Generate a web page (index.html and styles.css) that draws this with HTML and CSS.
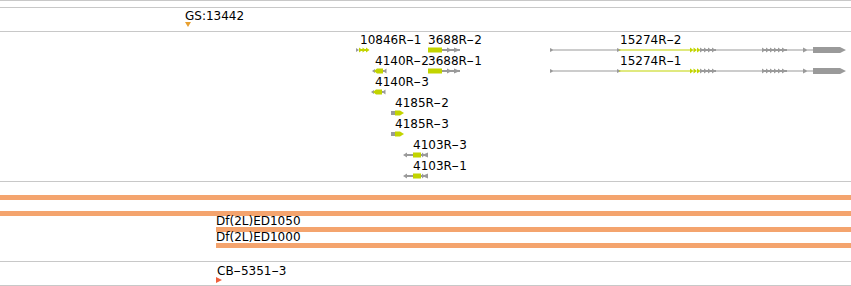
FILE: index.html
```html
<!DOCTYPE html>
<html lang="en">
<head>
    <meta charset="UTF-8">
    <meta name="viewport" content="width=device-width, initial-scale=1.0">
    <title>Track view</title>
    <link rel="stylesheet" href="styles.css">
</head>
<body>
    <div class="view">
        <div class="ruler"></div>

        <!-- GS track -->
        <div class="track track-gs">
            <div class="feat" style="left:185px;top:2px">
                <div class="lbl">GS:13442</div>
                <svg class="mark" width="7" height="5" viewBox="0 0 7 5"><path d="M0 0H6L3 5Z" fill="#e8a030"/></svg>
            </div>
        </div>

        <!-- gene models -->
        <div class="track track-genes">
            <div class="feat gene" style="left:356px;top:2px">
                <div class="lbl" style="padding-left:4px">10846R<span class="dash">-</span>1</div>
                <svg width="14" height="6" viewBox="0 0 14 6">
                    <path d="M0 1L3 3L0 5Z" fill="#9a9a9a"/>
                    <path d="M3 2H12V4H3Z M3 .5L6.5 3L3 5.5Z M6.5 .5L10 3L6.5 5.5Z M10 .5L13.5 3L10 5.5Z" fill="#c2d400"/>
                </svg>
            </div>
            <div class="feat gene" style="left:428px;top:2px">
                <div class="lbl">3688R<span class="dash">-</span>2</div>
                <svg width="34" height="6" viewBox="0 0 34 6">
                    <rect x="0" y=".5" width="14" height="5" fill="#c2d400"/>
                    <path d="M14 2H32V4H14Z M19 .5L24 3L19 5.5Z M26 .5L32 3L26 5.5Z" fill="#9a9a9a"/>
                </svg>
            </div>
            <div class="feat gene" style="left:550px;top:2px">
                <div class="lbl" style="padding-left:70px">15274R<span class="dash">-</span>2</div>
                <svg width="297" height="6" viewBox="0 0 297 6">
                    <path d="M0 1L4 3L0 5Z M0 2.5H67V3.5H0Z M67 1L71 3L67 5Z" fill="#9a9a9a"/>
                    <path d="M69 2.5H140V3.5H69Z M140 .5L143.5 3L140 5.5Z M143.5 .5L147 3L143.5 5.5Z M147 .5L150.5 3L147 5.5Z" fill="#c2d400"/>
                    <path d="M150 2H166V4H150Z M150 .5L153.5 3L150 5.5Z M154 .5L157.5 3L154 5.5Z M158 .5L161.5 3L158 5.5Z M162 .5L165.5 3L162 5.5Z
                             M166 2.5H212V3.5H166Z
                             M212 2H237V4H212Z M212 .5L215.5 3L212 5.5Z M216 .5L219.5 3L216 5.5Z M220 .5L223.5 3L220 5.5Z M224 .5L227.5 3L224 5.5Z M228 .5L231.5 3L228 5.5Z M232 .5L236 3L232 5.5Z
                             M237 2.5H263V3.5H237Z M253 .5L258 3L253 5.5Z
                             M263 0H290L296 3L290 6H263Z" fill="#9a9a9a"/>
                </svg>
            </div>

            <div class="feat gene" style="left:372px;top:23px">
                <div class="lbl" style="padding-left:3px">4140R<span class="dash">-</span>2</div>
                <svg width="15" height="6" viewBox="0 0 15 6">
                    <path d="M0 3L3 1V5Z M11 2H12V4H11Z M11 3L14.5 .5V5.5Z" fill="#9a9a9a"/>
                    <path d="M2 3L5 .5H11V5.5H5Z" fill="#c2d400"/>
                </svg>
            </div>
            <div class="feat gene" style="left:428px;top:23px">
                <div class="lbl">3688R<span class="dash">-</span>1</div>
                <svg width="34" height="6" viewBox="0 0 34 6">
                    <rect x="0" y=".5" width="14" height="5" fill="#c2d400"/>
                    <path d="M14 2H32V4H14Z M19 .5L24 3L19 5.5Z M26 .5L32 3L26 5.5Z" fill="#9a9a9a"/>
                </svg>
            </div>
            <div class="feat gene" style="left:550px;top:23px">
                <div class="lbl" style="padding-left:70px">15274R<span class="dash">-</span>1</div>
                <svg width="297" height="6" viewBox="0 0 297 6">
                    <path d="M0 1L4 3L0 5Z M0 2.5H67V3.5H0Z M67 1L71 3L67 5Z" fill="#9a9a9a"/>
                    <path d="M69 2.5H140V3.5H69Z M140 .5L143.5 3L140 5.5Z M143.5 .5L147 3L143.5 5.5Z M147 .5L150.5 3L147 5.5Z" fill="#c2d400"/>
                    <path d="M150 2H166V4H150Z M150 .5L153.5 3L150 5.5Z M154 .5L157.5 3L154 5.5Z M158 .5L161.5 3L158 5.5Z M162 .5L165.5 3L162 5.5Z
                             M166 2.5H212V3.5H166Z
                             M212 2H237V4H212Z M212 .5L215.5 3L212 5.5Z M216 .5L219.5 3L216 5.5Z M220 .5L223.5 3L220 5.5Z M224 .5L227.5 3L224 5.5Z M228 .5L231.5 3L228 5.5Z M232 .5L236 3L232 5.5Z
                             M237 2.5H263V3.5H237Z M253 .5L258 3L253 5.5Z
                             M263 0H290L296 3L290 6H263Z" fill="#9a9a9a"/>
                </svg>
            </div>

            <div class="feat gene" style="left:371px;top:44px">
                <div class="lbl" style="padding-left:4px">4140R<span class="dash">-</span>3</div>
                <svg width="15" height="6" viewBox="0 0 15 6">
                    <path d="M0 3L3 1V5Z M11 2H12V4H11Z M11 3L14.5 .5V5.5Z" fill="#9a9a9a"/>
                    <path d="M2 3L5 .5H11V5.5H5Z" fill="#c2d400"/>
                </svg>
            </div>

            <div class="feat gene" style="left:391px;top:65px">
                <div class="lbl" style="padding-left:4px">4185R<span class="dash">-</span>2</div>
                <svg width="14" height="6" viewBox="0 0 14 6">
                    <rect x="0" y="1" width="4" height="4" fill="#9a9a9a"/>
                    <path d="M4 .5H9L13 3L9 5.5H4Z" fill="#c2d400"/>
                </svg>
            </div>
            <div class="feat gene" style="left:391px;top:86px">
                <div class="lbl" style="padding-left:4px">4185R<span class="dash">-</span>3</div>
                <svg width="14" height="6" viewBox="0 0 14 6">
                    <rect x="0" y="1" width="4" height="4" fill="#9a9a9a"/>
                    <path d="M4 .5H9L13 3L9 5.5H4Z" fill="#c2d400"/>
                </svg>
            </div>

            <div class="feat gene" style="left:403px;top:107px">
                <div class="lbl" style="padding-left:10px">4103R<span class="dash">-</span>3</div>
                <svg width="26" height="6" viewBox="0 0 26 6">
                    <path d="M0 3L4 .5V2H10V4H4V5.5Z M18 2H20V4H18Z M19 3L25 .5V5.5Z M19 .5L22 3L19 5.5Z" fill="#9a9a9a"/>
                    <rect x="10" y=".5" width="8" height="5" fill="#c2d400"/>
                </svg>
            </div>
            <div class="feat gene" style="left:403px;top:128px">
                <div class="lbl" style="padding-left:10px">4103R<span class="dash">-</span>1</div>
                <svg width="26" height="6" viewBox="0 0 26 6">
                    <path d="M0 3L4 .5V2H10V4H4V5.5Z M18 2H20V4H18Z M19 3L25 .5V5.5Z M19 .5L22 3L19 5.5Z" fill="#9a9a9a"/>
                    <rect x="10" y=".5" width="8" height="5" fill="#c2d400"/>
                </svg>
            </div>
        </div>

        <!-- deficiencies -->
        <div class="track track-df">
            <div class="feat span" style="left:0;top:13px">
                <div class="bar"></div>
            </div>
            <div class="feat span" style="left:0;top:29px">
                <div class="bar"></div>
            </div>
            <div class="feat span" style="left:216px;top:33px">
                <div class="lbl">Df(2L)ED1050</div>
                <div class="bar"></div>
            </div>
            <div class="feat span" style="left:216px;top:49px">
                <div class="lbl">Df(2L)ED1000</div>
                <div class="bar"></div>
            </div>
        </div>

        <!-- insertions -->
        <div class="track track-cb">
            <div class="feat" style="left:216px;top:3px">
                <div class="lbl" style="padding-left:1px">CB<span class="dash">-</span>5351<span class="dash">-</span>3</div>
                <svg class="mark" width="7" height="6" viewBox="0 0 7 6"><path d="M0 0L6 3L0 6Z" fill="#f0603c"/></svg>
            </div>
        </div>
    </div>
</body>
</html>
```

FILE: styles.css
```css
* {
    margin: 0;
    padding: 0;
    box-sizing: border-box;
}
body {
    width: 851px;
    height: 286px;
    overflow: hidden;
    background-color: #ffffff;
    color: #000000;
    font-family: "DejaVu Sans", Verdana, sans-serif;
    font-size: 12px;
}
.view {
    border-top: 1px solid #c8c8c8;
}
.ruler {
    height: 7px;
    border-bottom: 1px solid #c8c8c8;
}
.track {
    position: relative;
    overflow: hidden;
    border-bottom: 1px solid #c8c8c8;
}
.track-gs {
    height: 24px;
}
.track-genes {
    height: 150px;
}
.track-df {
    height: 80px;
}
.track-cb {
    height: 24px;
}
.feat {
    position: absolute;
}
.lbl {
    line-height: 12px;
    height: 12px;
    white-space: nowrap;
}
/* the dashes in the labels are drawn long */
.dash {
    display: inline-block;
    margin: 0 1.5px;
    transform: scaleX(1.8);
}
.feat svg {
    display: block;
}
.gene svg {
    margin-top: 1px;
}
.span {
    right: 0;
}
.bar {
    height: 5px;
    background-color: #f4a46e;
}
```
